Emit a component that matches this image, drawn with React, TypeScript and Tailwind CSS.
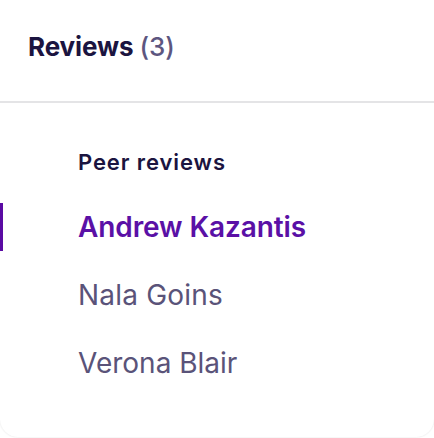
import React from "react";

export default function App() {
  const font = { fontFamily: "Inter, 'Noto Sans', sans-serif" };
  return (
    <div className="w-[434px] h-[438px] bg-white overflow-hidden" style={font}>
      <div className="h-[437px] rounded-b-[18px] bg-white shadow-[0_0_2px_rgba(0,0,0,0.12)] flex flex-col">
        <div className="h-[103px] pl-[28px] pt-[30px] border-b-2 border-[#e4e4e6]">
          <h2 className="text-[26px] leading-[34px] font-bold text-[#1b1440] tracking-[-0.1px]">
            Reviews <span className="font-medium text-[#5d5680]">(3)</span>
          </h2>
        </div>
        <nav className="pt-[45px] flex flex-col">
          <div className="pl-[78px] text-[22px] leading-[28px] font-semibold text-[#1b1440] tracking-[0.9px]">Peer reviews</div>
          <div className="relative mt-[27px] h-[48px] flex items-center pl-[78px]">
            <span className="absolute left-0 top-0 bottom-0 w-[3px] bg-[#5a0aa3]" />
            <span className="text-[28px] font-semibold text-[#5a10a6] tracking-[-0.1px]">Andrew Kazantis</span>
          </div>
          <div className="mt-[20px] h-[48px] flex items-center pl-[78px] text-[28px] text-[#5a5379] tracking-[0.2px]">Nala Goins</div>
          <div className="mt-[20px] h-[48px] flex items-center pl-[78px] text-[28px] text-[#5a5379]">Verona Blair</div>
        </nav>
      </div>
    </div>
  );
}
